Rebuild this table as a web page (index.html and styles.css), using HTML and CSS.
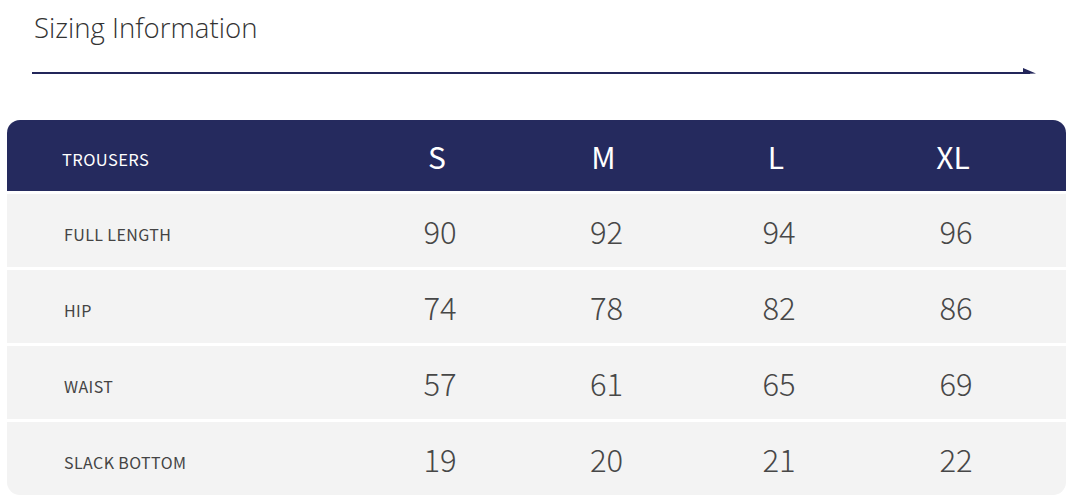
FILE: index.html
```html
<!DOCTYPE html>
<html>
<head>
<meta charset="utf-8">
<link rel="stylesheet" href="styles.css">
</head>
<body>
<div class="page">
  <h1 class="title">Sizing Information</h1>
  <svg class="rule" width="1072" height="12" viewBox="0 0 1072 12">
    <line x1="32" y1="6" x2="1030" y2="6" stroke="#23265a" stroke-width="2"/>
    <polygon points="1023,1 1036,6.5 1023,7" fill="#23265a"/>
  </svg>
  <div class="table">
    <div class="row head">
      <div class="label">TROUSERS</div>
      <div class="cell">S</div>
      <div class="cell">M</div>
      <div class="cell">L</div>
      <div class="cell">XL</div>
    </div>
    <div class="row">
      <div class="label">FULL LENGTH</div>
      <div class="cell">90</div>
      <div class="cell">92</div>
      <div class="cell">94</div>
      <div class="cell">96</div>
    </div>
    <div class="row">
      <div class="label">HIP</div>
      <div class="cell">74</div>
      <div class="cell">78</div>
      <div class="cell">82</div>
      <div class="cell">86</div>
    </div>
    <div class="row">
      <div class="label">WAIST</div>
      <div class="cell">57</div>
      <div class="cell">61</div>
      <div class="cell">65</div>
      <div class="cell">69</div>
    </div>
    <div class="row">
      <div class="label">SLACK BOTTOM</div>
      <div class="cell">19</div>
      <div class="cell">20</div>
      <div class="cell">21</div>
      <div class="cell">22</div>
    </div>
  </div>
</div>
</body>
</html>
```

FILE: styles.css
```css
html, body {
  margin: 0;
  padding: 0;
  background: #ffffff;
}

.page {
  width: 1072px;
  height: 503px;
  overflow: hidden;
  font-family: "Noto Sans CJK SC", "Noto Sans", sans-serif;
}

.title {
  margin: 0;
  padding: 8px 0 0 34px;
  height: 52px;
  box-sizing: border-box;
  font-family: "Open Sans", "Noto Sans", sans-serif;
  font-weight: 300;
  font-size: 27.6px;
  line-height: 38px;
  color: #333;
}

.rule {
  display: block;
  margin-top: 15px;
}

.table {
  margin: 41px 0 0 7px;
  width: 1059px;
  border-radius: 13px;
  overflow: hidden;
  display: flex;
  flex-direction: column;
  gap: 3px;
}

.row {
  display: grid;
  grid-template-columns: 351px 164px 169px 176px 178px 1fr;
  align-items: center;
  height: 73px;
  background: #f3f3f3;
  color: #474747;
}

.row.head {
  height: 71px;
  background: #252a5e;
  color: #ffffff;
}

.label {
  padding: 6px 0 0 57px;
  font-size: 16px;
  letter-spacing: 0.4px;
  color: #444;
}

.head .label {
  padding: 6px 0 0 55px;
  color: #ffffff;
  font-weight: 400;
  font-size: 16.5px;
}

.cell {
  text-align: center;
  font-size: 31px;
  font-weight: 300;
  line-height: 40px;
}

.head .cell {
  font-weight: 400;
  font-size: 30px;
  padding-right: 6px;
}
```
